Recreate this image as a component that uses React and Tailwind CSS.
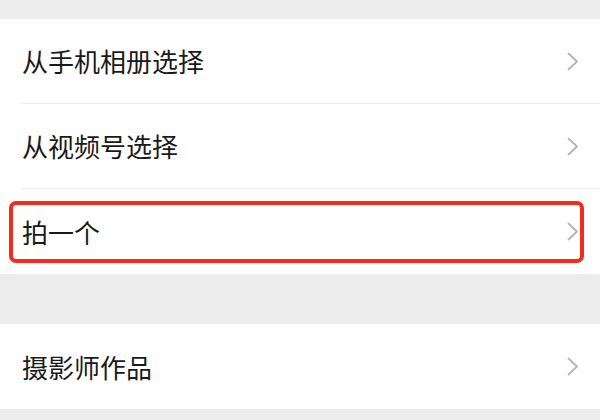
const ITEMS_TOP = ['从手机相册选择', '从视频号选择'];

function Chevron() {
  return (
    <svg width="12" height="19" viewBox="0 0 12 19" fill="none" className="shrink-0">
      <path d="M1.5 1.5 L10 9.5 L1.5 17.5" stroke="#b4b4b4" strokeWidth="1.8" strokeLinecap="round" strokeLinejoin="round" />
    </svg>
  );
}

function Row({ label, divider = true }) {
  return (
    <div className="h-[85px] bg-white pl-[22px] flex">
      <div className={`flex-1 flex items-center justify-between pr-[21px] ${divider ? 'border-b border-[#ececec]' : ''}`}>
        <span className="text-[26px] text-[#1a1a1a] leading-none">{label}</span>
        <Chevron />
      </div>
    </div>
  );
}

export default function App() {
  return (
    <div
      className="w-[600px] h-[420px] bg-[#ededed] overflow-hidden flex flex-col"
      style={{ fontFamily: '"Noto Sans CJK SC", "Noto Sans", sans-serif' }}
    >
      <div className="h-[19px] shrink-0" />
      {ITEMS_TOP.map((label) => (
        <Row key={label} label={label} />
      ))}
      <div className="h-[85px] bg-white flex items-center pl-[9px] pr-[16px] shrink-0">
        <div className="flex-1 h-[62px] border-4 border-[#f42a1f] rounded-[7px] flex items-center justify-between pl-[9px] pr-[1px]">
          <span className="text-[26px] text-[#1a1a1a] leading-none">拍一个</span>
          <Chevron />
        </div>
      </div>
      <div className="h-[50px] shrink-0" />
      <Row label="摄影师作品" divider={false} />
    </div>
  );
}
